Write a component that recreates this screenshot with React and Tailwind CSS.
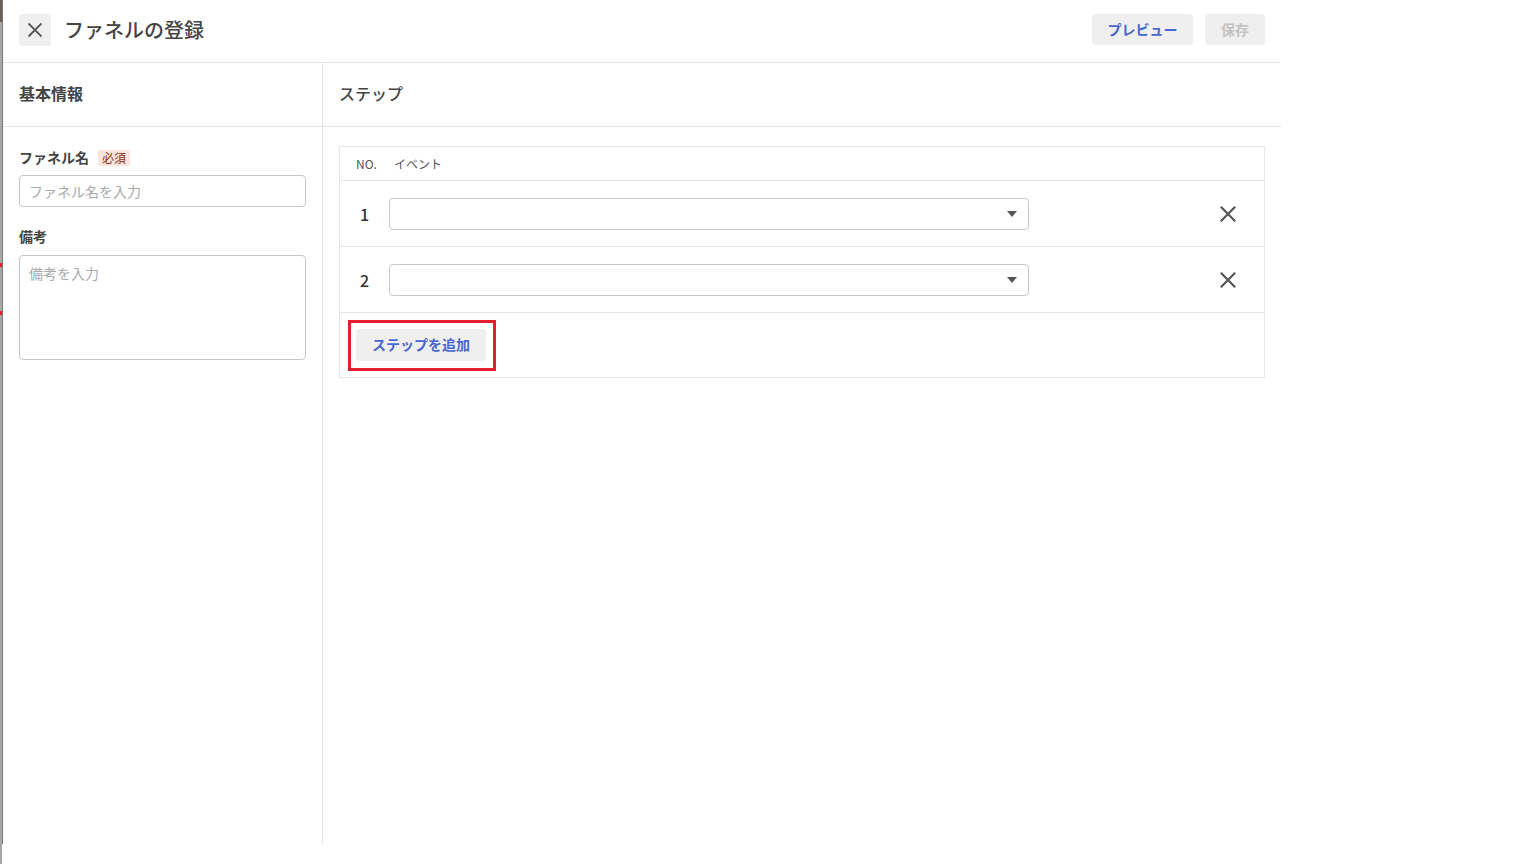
const font = { fontFamily: '"Noto Sans CJK JP", "Noto Sans", sans-serif' };

function XIcon({ className, width = 2.2 }) {
  return (
    <svg viewBox="0 0 24 24" className={className} fill="none" stroke="currentColor" strokeWidth={width} strokeLinecap="square">
      <path d="M5 5L19 19M19 5L5 19" />
    </svg>
  );
}

function StepRow({ no }) {
  return (
    <div className="flex h-[66px] items-center border-b border-[#e6e6e6] pl-[20px]">
      <span className="w-[29px] text-[16px] font-medium text-[#333]">{no}</span>
      <div className="flex h-[32px] w-[640px] items-center justify-end rounded-[4px] border border-[#c8c8c8] bg-white pr-[11px]">
        <svg viewBox="0 0 10 6" className="h-[6px] w-[10px] text-[#555]">
          <path d="M0 0H10L5 6Z" fill="currentColor" />
        </svg>
      </div>
      <button className="ml-auto mr-[25px] text-[#555]">
        <XIcon className="h-[22px] w-[22px]" width={2.4} />
      </button>
    </div>
  );
}

export default function App() {
  return (
    <div className="flex h-[864px] w-[1536px] bg-white" style={font}>
      <div className="flex w-[2px] flex-col bg-[#a8a8a8]">
        <div className="h-[22px] bg-[#6b5e55]" />
        <div className="mt-[241px] h-[4px] w-[2px] bg-[#e0202a]" />
        <div className="mt-[44px] h-[4px] w-[2px] bg-[#e0202a]" />
      </div>
      <div className="flex h-[844px] w-[1278px] flex-col border-l border-[#777]">
        <header className="flex h-[63px] items-center border-b border-[#e4e4e4] pb-[2px] pl-[16px] pr-[15px]">
          <button className="flex h-[32px] w-[32px] items-center justify-center rounded-[4px] bg-[#efefef] text-[#555]">
            <XIcon className="h-[20px] w-[20px]" />
          </button>
          <h1 className="ml-[13px] text-[20px] font-medium text-[#444]">ファネルの登録</h1>
          <div className="mb-[2px] ml-auto flex gap-[12px]">
            <button className="h-[31px] w-[101px] rounded-[4px] bg-[#efefef] text-[14px] font-bold text-[#4a66cf]">プレビュー</button>
            <button className="h-[31px] w-[60px] rounded-[4px] bg-[#efefef] text-[14px] font-bold text-[#c2c2c2]">保存</button>
          </div>
        </header>
        <div className="flex flex-1">
          <aside className="flex w-[320px] flex-col border-r border-[#e4e4e4]">
            <div className="flex h-[64px] items-center border-b border-[#e4e4e4] px-[16px] pb-[3px]">
              <h2 className="text-[16px] font-bold text-[#444]">基本情報</h2>
            </div>
            <div className="flex flex-col px-[16px] pt-[20px]">
              <div className="flex items-center gap-[9px]">
                <span className="text-[14px] font-bold text-[#444]">ファネル名</span>
                <span className="bg-[#fbe6df] px-[4px] text-[12px] leading-[16px] text-[#8f2d12]">必須</span>
              </div>
              <input
                placeholder="ファネル名を入力"
                className="mt-[7px] h-[32px] w-[287px] rounded-[4px] border border-[#c8c8c8] px-[9px] text-[14px] text-[#333] outline-none placeholder:text-[#a9a9a9]"
              />
              <span className="mt-[19px] text-[14px] font-bold text-[#444]">備考</span>
              <textarea
                placeholder="備考を入力"
                className="mt-[8px] h-[105px] w-[287px] resize-none rounded-[4px] border border-[#c8c8c8] px-[9px] py-[7px] text-[14px] text-[#333] outline-none placeholder:text-[#a9a9a9]"
              />
            </div>
          </aside>
          <main className="flex flex-1 flex-col">
            <div className="flex h-[64px] items-center border-b border-[#e4e4e4] px-[16px] pb-[3px]">
              <h2 className="text-[16px] font-medium text-[#444]">ステップ</h2>
            </div>
            <div className="px-[16px] pt-[19px]">
              <div className="w-[926px] border border-[#e6e6e6]">
                <div className="flex h-[34px] items-center gap-[17px] border-b border-[#e6e6e6] pl-[16px] text-[12px] text-[#555]">
                  <span>NO.</span>
                  <span>イベント</span>
                </div>
                <StepRow no="1" />
                <StepRow no="2" />
                <div className="flex h-[64px] items-center pl-[8px]">
                  <div className="border-[3px] border-[#e41e2b] pb-[7px] pl-[5px] pr-[7px] pt-[6px]">
                    <button className="h-[32px] w-[130px] rounded-[4px] bg-[#efefef] text-[14px] font-bold text-[#4a66cf]">ステップを追加</button>
                  </div>
                </div>
              </div>
            </div>
          </main>
        </div>
      </div>
    </div>
  );
}
